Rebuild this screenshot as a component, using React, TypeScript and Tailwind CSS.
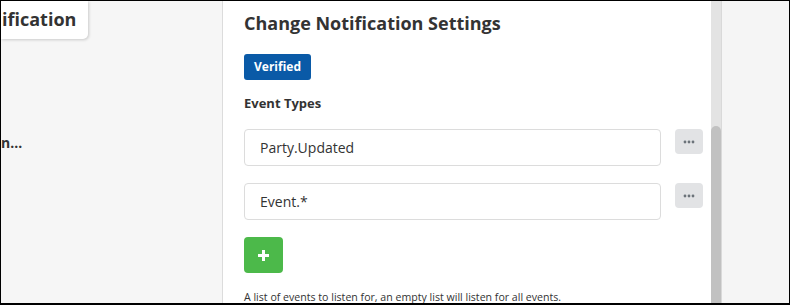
import React from 'react';

function DotsButton() {
  return (
    <button className="w-[28px] h-[25px] rounded-[4px] bg-[#e2e3e5] flex items-center justify-center shrink-0">
      <svg width="12" height="4" viewBox="0 0 12 4">
        <circle cx="2" cy="2" r="1.4" fill="#6c737a" />
        <circle cx="6" cy="2" r="1.4" fill="#6c737a" />
        <circle cx="10" cy="2" r="1.4" fill="#6c737a" />
      </svg>
    </button>
  );
}

function EventRow({ value }: { value: string }) {
  return (
    <div className="flex items-start gap-[14px]">
      <div className="w-[417px] h-[37px] border border-[#dcdcdc] rounded-[4px] flex items-center pl-[15px] text-[14px] text-[#333]">
        {value}
      </div>
      <DotsButton />
    </div>
  );
}

export default function App() {
  const events = ['Party.Updated', 'Event.*'];

  return (
    <div className="w-[790px] h-[305px] border border-b-2 border-black flex overflow-hidden font-['Open_Sans',sans-serif] text-[#333]">
      {/* left list panel (cut off) */}
      <div className="w-[222px] shrink-0 bg-[#f6f6f6] border-r border-[#dcdcdc] overflow-hidden">
        <div className="w-[87px] h-[38px] bg-white rounded-br-[5px] shadow-[1px_1px_3px_rgba(0,0,0,0.18)] flex items-start pt-[6px] pl-[1px]">
          <span className="text-[18px] font-bold leading-[24px] text-[#333]">ification</span>
        </div>
        <div className="mt-[94px] text-[14px] font-bold leading-[20px] text-[#333]">n...</div>
      </div>

      {/* settings panel */}
      <div className="w-[488px] shrink-0 bg-white pl-[21px] pt-[8px]">
        <h2 className="text-[18px] font-bold leading-[28px] text-[#333]">Change Notification Settings</h2>
        <span className="inline-block mt-[17px] bg-[#0a5aa7] text-white text-[12px] font-bold leading-[26px] px-[10px] rounded-[3px]">
          Verified
        </span>
        <div className="mt-[14px] text-[13px] font-bold leading-[18px]">Event Types</div>
        <div className="mt-[17px] flex flex-col gap-[17px]">
          {events.map((e) => (
            <EventRow key={e} value={e} />
          ))}
        </div>
        <button className="mt-[17px] w-[39px] h-[36px] rounded-[4px] bg-[#4cb94a] flex items-center justify-center">
          <svg width="13" height="13" viewBox="0 0 13 13">
            <path d="M6.5 1v11M1 6.5h11" stroke="white" strokeWidth="3" />
          </svg>
        </button>
        <p className="mt-[16px] text-[10.6px] leading-[16px] text-[#333]">
          A list of events to listen for, an empty list will listen for all events.
        </p>
      </div>

      {/* scrollbar */}
      <div className="w-[10px] shrink-0 bg-[#e3e3e3] flex flex-col">
        <div className="mt-[125px] flex-1 bg-[#c1c1c1] rounded-t-[5px]" />
      </div>
      <div className="w-[1px] shrink-0 bg-[#d9d9d9]" />

      {/* right gutter */}
      <div className="flex-1 bg-[#f5f5f5]" />
    </div>
  );
}
